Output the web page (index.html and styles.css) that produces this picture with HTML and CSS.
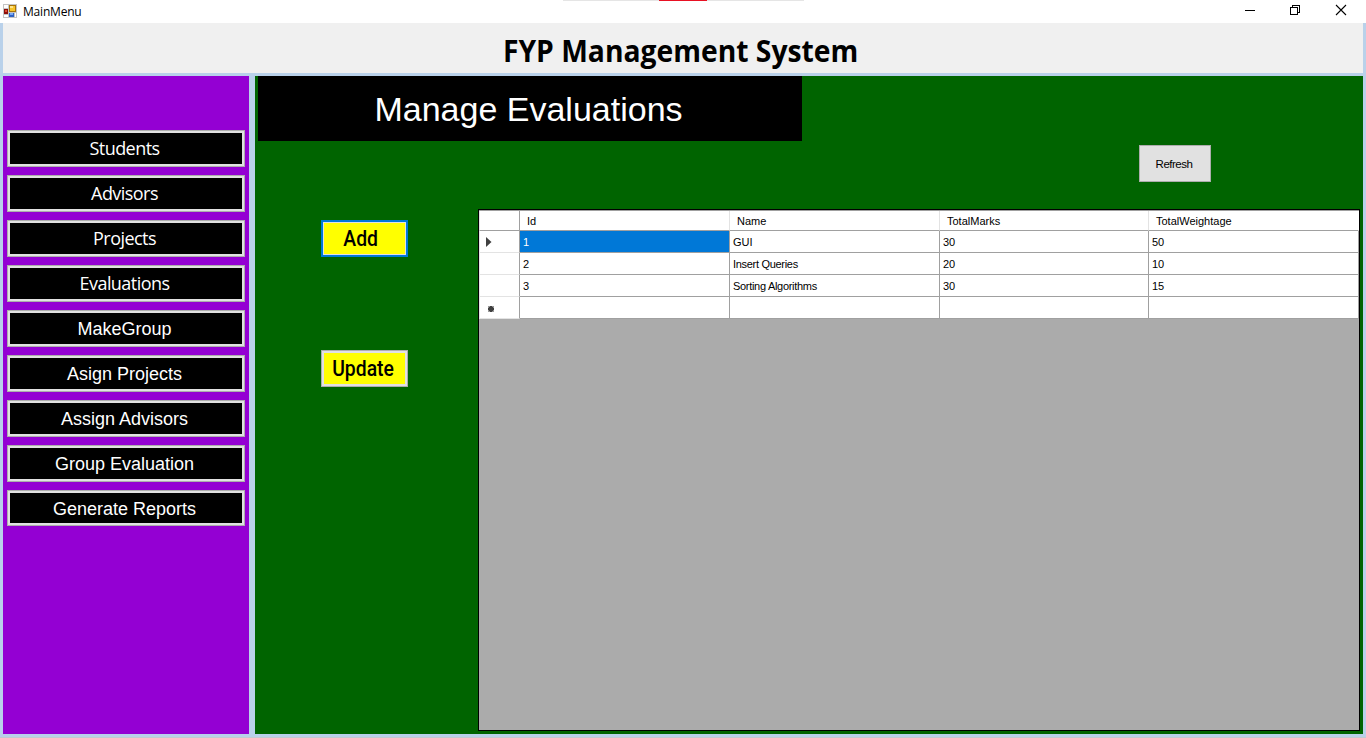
FILE: index.html
```html
<!DOCTYPE html>
<html lang="en">
<head>
<meta charset="utf-8">
<title>MainMenu</title>
<link rel="stylesheet" href="styles.css">
</head>
<body>
<div class="window">
  <header class="titlebar">
    <svg class="app-icon" width="14" height="14" viewBox="0 0 14 14" shape-rendering="crispEdges">
      <path fill="#c4c4c4" d="M0 0h14v14H0z"/>
      <path fill="#fff" d="M1 1h4v3H1zM1 11h4v2H1zM12 9h1v4h-1z"/>
      <path fill="#8e0f0a" d="M1 5h4v5H1z"/><path fill="#e04a32" d="M2 6h2v2H2z"/>
      <path fill="#a87408" d="M6 1h7v7H6z"/><path fill="#f7c52c" d="M7 2h5v5H7z"/><path fill="#ffe48a" d="M7 2h3v2H7z"/>
      <path fill="#2f62c4" d="M6 9h5v4H6z"/><path fill="#78a8f5" d="M7 9h3v2H7z"/>
    </svg>
    <span class="caption">MainMenu</span>
    <span class="share-bar"><i class="share-mark"></i></span>
    <svg class="controls" width="104" height="23" viewBox="0 0 104 23" shape-rendering="crispEdges">
      <path d="M0 10.5h10M45.500 7.500h7v7h-7zM47.500 7v-1.500h7v7H53" fill="none" stroke="#000"/>
      <path d="M91 5l10 10M101 5l-10 10" fill="none" stroke="#000" stroke-width="1.100" shape-rendering="auto"/>
    </svg>
  </header>
  <div class="client">
    <div class="banner"><span class="banner-text">FYP Management System</span></div>
    <div class="body">
      <nav class="sidebar">
        <button class="nav segoe">Students</button>
        <button class="nav segoe">Advisors</button>
        <button class="nav segoe">Projects</button>
        <button class="nav segoe">Evaluations</button>
        <button class="nav">MakeGroup</button>
        <button class="nav">Asign Projects</button>
        <button class="nav">Assign Advisors</button>
        <button class="nav">Group Evaluation</button>
        <button class="nav last">Generate Reports</button>
      </nav>
      <main class="main">
        <h1 class="heading">Manage Evaluations</h1>
        <div class="toolbar"><button class="refresh">Refresh</button></div>
        <div class="work">
          <div class="actions">
            <button class="action focused"><span class="action-text">Add</span></button>
            <button class="action"><span class="action-text">Update</span></button>
          </div>
          <div class="datagrid">
            <div class="row head"><div class="rh"></div><div class="cell first">Id</div><div class="cell">Name</div><div class="cell">TotalMarks</div><div class="cell">TotalWeightage</div></div>
            <div class="row"><div class="rh"><svg width="6" height="10" viewBox="0 0 6 10"><path fill="#404040" d="M0 0l5.500 5L0 10z"/></svg></div><div class="cell selected">1</div><div class="cell">GUI</div><div class="cell">30</div><div class="cell">50</div></div>
            <div class="row"><div class="rh"></div><div class="cell">2</div><div class="cell tight">Insert Queries</div><div class="cell">20</div><div class="cell">10</div></div>
            <div class="row"><div class="rh"></div><div class="cell">3</div><div class="cell tight">Sorting Algorithms</div><div class="cell">30</div><div class="cell">15</div></div>
            <div class="row"><div class="rh new"><svg width="6" height="6" viewBox="0 0 6 6"><path fill="#999" d="M0 0h6v6H0z"/><path fill="#404040" d="M1 1h4v4H1zM2 0h2v6H2zM0 2h6v2H0z"/></svg></div><div class="cell"></div><div class="cell"></div><div class="cell"></div><div class="cell"></div></div>
          </div>
        </div>
      </main>
    </div>
  </div>
</div>
</body>
</html>
```
FILE: styles.css
```css
* { box-sizing: border-box; }
body { margin: 0; overflow: hidden; font-family: "Liberation Sans", Arial, sans-serif; }
button { font: inherit; margin: 0; padding: 0; border-radius: 0; }
.window { width: 1366px; height: 738px; display: flex; flex-direction: column; background: #b9d1ea; border-bottom: 1px solid #c4cad0; }
.titlebar { position: relative; height: 23px; flex: none; background: #fff; display: flex; align-items: center; padding-left: 3px; }
.app-icon { margin-top: -1px; }
.caption { margin-left: 6px; font: 12px/16px "Open Sans", sans-serif; letter-spacing: -0.2px; }
.share-bar { position: absolute; left: 563px; top: 0; width: 241px; height: 1px; background: #e5e5e5; }
.share-mark { display: block; width: 48px; height: 1px; margin-left: 96px; background: #e81123; }
.controls { margin-left: auto; margin-right: 17px; }
.client { flex: 1; display: flex; flex-direction: column; gap: 3px; padding: 0 3px; min-height: 0; }
.banner { height: 50px; flex: none; background: #f0f0f0; display: flex; justify-content: center; align-items: center; }
.banner-text { font: bold 30px/40px "Open Sans", sans-serif; white-space: nowrap; margin-top: 6px; margin-right: 5px; transform: scaleX(.942); }
.body { height: 658px; display: flex; gap: 6px; }
.sidebar { width: 246px; background: #9400d3; padding: 54px 4px 0; display: flex; flex-direction: column; gap: 8px; }
.nav { height: 37px; flex: none; background: #000; color: #fff; border: 1px solid #adadad; box-shadow: inset 0 0 0 2px #e1e1e1; font-size: 18px; padding: 1px 3px 0 0; }
.nav.segoe { font-family: "Open Sans", sans-serif; font-size: 18px; letter-spacing: -0.55px; padding: 0 3px 2px 0; }
.nav.last { height: 36px; padding-top: 2px; }
.main { width: 1108px; background: #006400; padding: 0 3px 3px; display: flex; flex-direction: column; }
.heading { margin: 0; width: 544px; height: 65px; background: #000; color: #fff; font-weight: 400; font-size: 34px; line-height: 67px; text-align: center; padding-right: 3px; white-space: nowrap; }
.toolbar { height: 68px; padding: 4px 149px 0 0; display: flex; justify-content: flex-end; align-items: flex-start; }
.refresh { width: 72px; height: 37px; background: #e1e1e1; border: 1px solid #adadad; font-size: 11.500px; letter-spacing: -0.5px; padding-right: 2px; color: #000; }
.work { flex: 1; display: flex; }
.actions { width: 220px; padding: 11px 0 0 63px; display: flex; flex-direction: column; gap: 93px; }
.action { width: 87px; height: 37px; background: #ff0; border: 1px solid #adadad; box-shadow: inset 0 0 0 2px #e1e1e1; font: 500 22px "Roboto", sans-serif; color: #000; padding-right: 2px; }
.action.focused { border: 2px solid #0078d7; box-shadow: inset 0 0 0 1px #e1e1e1; padding-right: 8px; }
.action-text { display: inline-block; transform: scaleX(.88); }
.datagrid { width: 882px; height: 522px; background: #ababab; border: 1px solid #000; font-size: 11px; color: #000; }
.row { display: grid; grid-template-columns: 41px 210px 210px 209px 210px; height: 22px; }
.row.head { height: 21px; border-top: 1px solid #a0a0a0; }
.rh { background: #fff; border-right: 1px solid #a0a0a0; border-bottom: 1px solid #e3e3e3; border-left: 1px solid #e3e3e3; display: flex; align-items: center; padding: 1px 0 0 6px; }
.rh.new { padding: 3px 0 0 8px; }
.cell { background: #fff; border-right: 1px solid #a0a0a0; border-bottom: 1px solid #a0a0a0; height: 22px; line-height: 22px; padding-left: 3px; white-space: nowrap; }
.cell.tight { letter-spacing: -0.3px; }
.head .cell { height: 20px; line-height: 20px; padding-left: 7px; border-right-color: #e3e3e3; }
.head .cell:last-child { border-right-color: #fff; }
.head .rh { height: 20px; border-bottom-color: #a0a0a0; }
.cell.selected { background: #0078d7; color: #fff; }
```
